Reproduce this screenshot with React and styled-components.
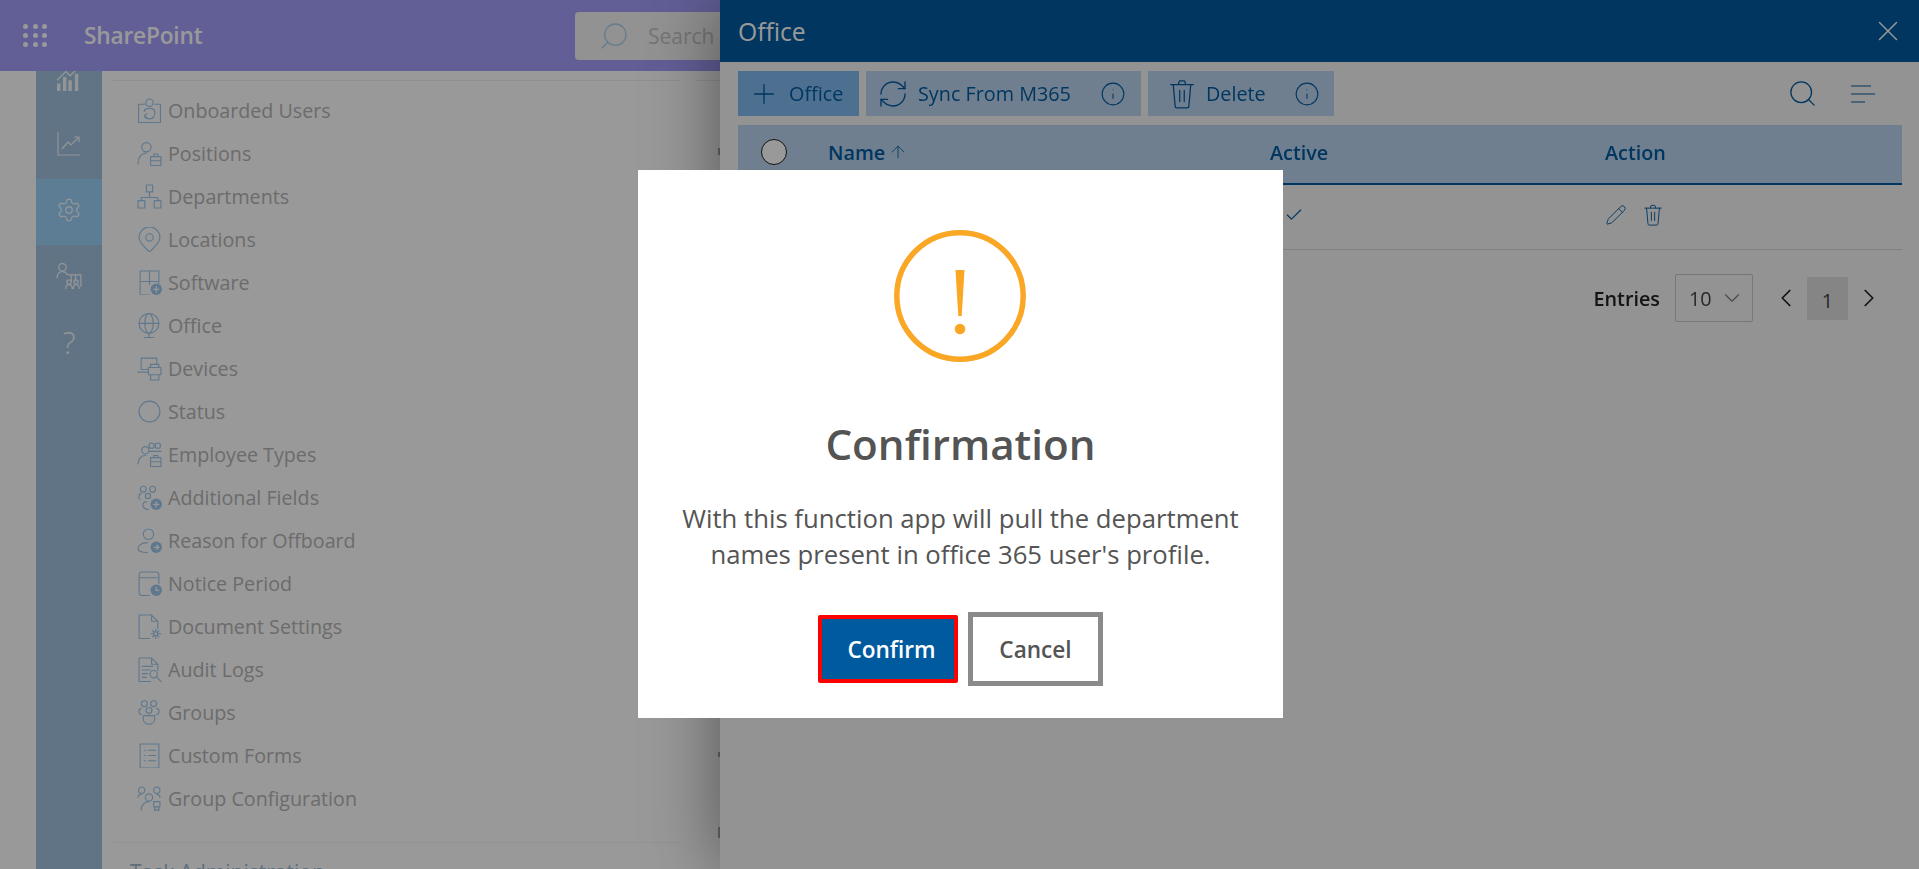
import styled, { createGlobalStyle } from 'styled-components'
import { Settings, Plus, RefreshCw, Info, Search, Check, Pencil, ChevronDown, ChevronLeft, ChevronRight, X, ArrowUp } from 'lucide-react'

const GlobalStyle = createGlobalStyle`
    html, body {
        margin: 0;
        height: 100%;
        overflow: hidden;
        background: #fff;
    }

    * {
        box-sizing: border-box;
    }

    body, button {
        font-family: "Open Sans", "Noto Sans", sans-serif;
    }
`

const Page = styled.div`
    display: flex;
    flex-direction: column;
    height: 869px;
    overflow: hidden;
`

// top bar

const TopBar = styled.header`
    flex: none;
    display: flex;
    align-items: center;
    height: 71px;
    padding-left: 23px;
    background: #a39efc;
    color: #fff;
    position: relative;
    z-index: 1;
`

const Waffle = styled.div`
    display: grid;
    grid-template-columns: repeat(3, 5px);
    gap: 4px 4.5px;
    width: 24px;
    margin-right: 37px;

    span {
        width: 5px;
        height: 5px;
        border-radius: 50%;
        background: #fff;
    }
`

const Brand = styled.span`
    width: 491px;
    font-size: 22.7px;
    font-weight: 600;
    letter-spacing: -.2px;
`

const SearchBox = styled.div`
    display: flex;
    align-items: center;
    gap: 18px;
    width: 600px;
    height: 48px;
    padding-left: 23px;
    border-radius: 4px;
    background: #f4f4f4;
    color: #c4c4c4;
    font-size: 21px;

    svg {
        color: #a8d0ee;
        transform: scaleX(-1);
    }
`

// left rail

const Body = styled.div`
    flex: 1;
    min-height: 0;
    display: flex;
    padding-left: 36px;
`

const Rail = styled.nav`
    flex: none;
    width: 66px;
    display: flex;
    flex-direction: column;
    background: #a0c1de;
    overflow: hidden;
`

const RailList = styled.div`
    margin-top: -24px;
`

const RailItem = styled.div`
    display: flex;
    align-items: center;
    justify-content: center;
    height: 66px;
    padding-bottom: 4px;
    background: ${props => props.$active ? '#9bd0f8' : 'transparent'};
    color: #f4f8fb;
    font-size: 31px;
    font-weight: 300;
`

// settings list

const Content = styled.main`
    flex: 1;
    min-width: 0;
    display: flex;
    gap: 16px;
    padding: 9px 0 0 11px;
`

const ListColumn = styled.section`
    flex: none;
    width: 567px;
    border-top: 1px solid #eee;
    padding-top: 8px;
`

const ListItem = styled.div`
    display: flex;
    align-items: center;
    gap: 6px;
    height: 43px;
    padding-left: 24px;
    color: #b4b4b4;
    font-size: 19.7px;
    white-space: nowrap;
`

const ItemIcon = styled.svg`
    flex: none;
    width: 25px;
    height: 25px;
    fill: none;
    stroke: #9fc9ec;
    stroke-width: 1.1;
    stroke-linecap: round;
    stroke-linejoin: round;

    .badge {
        fill: #9fc9ec;
        stroke: none;
    }

    .inner {
        stroke: #fff;
        stroke-width: 1.2;
    }
`

const SectionFoot = styled.div`
    margin-top: 22px;
    border-top: 1px solid #f4f4f4;
    padding: 15px 0 0 17px;
    color: #9fb9cf;
    font-size: 21px;
    white-space: nowrap;
`

const SideColumn = styled.section`
    flex: 1;
    border-top: 1px solid #eee;
`

const CutOffMark = styled.span`
    display: block;
    width: 2px;
    height: ${props => props.$height}px;
    margin: ${props => props.$top}px 0 0 22px;
    background: #aaa;
`

// office panel

const Panel = styled.aside`
    position: fixed;
    top: 0;
    right: 0;
    bottom: 0;
    width: 1199px;
    display: flex;
    flex-direction: column;
    background: #f5f5f5;
    box-shadow: 0 0 70px rgba(0, 0, 0, .45);
    z-index: 2;
`

const PanelHeader = styled.div`
    flex: none;
    display: flex;
    align-items: center;
    justify-content: space-between;
    height: 62px;
    padding: 0 14px 0 18px;
    background: #005a9e;
    color: #fff;
    font-size: 24.7px;
`

const Toolbar = styled.div`
    display: flex;
    align-items: center;
    height: 45px;
    margin: 9px 17px 9px 18px;
`

const ToolButton = styled.button`
    display: flex;
    align-items: center;
    width: ${props => props.$width}px;
    height: 45px;
    margin-right: 7px;
    padding: 0 0 0 ${props => props.$inset}px;
    border: 0;
    background: ${props => props.$primary ? '#82bbf0' : '#b9d4ee'};
    color: #005a9e;
    font-size: 19.8px;
`

const ToolLabel = styled.span`
    margin-left: ${props => props.$left}px;
    margin-right: auto;
`

const ToolInfo = styled(Info)`
    margin-right: ${props => props.$right}px;
`

const ToolbarEnd = styled.div`
    margin-left: auto;
    display: flex;
    align-items: center;
    gap: 33px;
    margin-right: 27px;
    color: #005a9e;
`

const Table = styled.div`
    margin: 0 17px 0 18px;
`

const TableHead = styled.div`
    display: grid;
    grid-template-columns: 90px 442px 335px 1fr;
    align-items: center;
    height: 60px;
    padding-bottom: 4px;
    background: #b9d4ee;
    border-bottom: 2px solid #005a9e;
    color: #005a9e;
    font-size: 19.8px;
    font-weight: 600;
`

const TableRow = styled.div`
    display: grid;
    grid-template-columns: 90px 442px 335px 1fr;
    align-items: center;
    height: 65px;
    padding-bottom: 4px;
    border-bottom: 1px solid #d8d8d8;
    color: #005a9e;
`

const SelectCircle = styled.span`
    display: block;
    width: 26px;
    height: 26px;
    margin-left: 23px;
    border: 1px solid #222;
    border-radius: 50%;
    background: #fff;
`

const NameCell = styled.span`
    display: flex;
    align-items: center;
    gap: 3px;
`

const CheckCell = styled.span`
    display: flex;
    padding-left: 14px;
`

const ActionCell = styled.span`
    display: flex;
    align-items: center;
    gap: 15px;
`

const Pagination = styled.div`
    display: flex;
    align-items: center;
    justify-content: flex-end;
    margin: 24px 35px 0 0;
    color: #222;
    font-size: 19.8px;
`

const EntriesLabel = styled.span`
    margin-right: 15px;
    font-weight: 600;
`

const PageSelect = styled.div`
    display: flex;
    align-items: center;
    justify-content: space-between;
    width: 78px;
    height: 48px;
    margin-right: 18px;
    padding: 0 7px 0 13px;
    border: 1px solid #c6c6c6;
    border-radius: 2px;
    color: #444;

    svg {
        color: #777;
    }
`

const PageNumber = styled.span`
    display: flex;
    align-items: center;
    justify-content: center;
    width: 41px;
    height: 43px;
    margin: 0 6px;
    padding-top: 4px;
    background: #dedede;
    color: #444;
`

// confirmation dialog

const Overlay = styled.div`
    position: fixed;
    inset: 0;
    display: flex;
    align-items: center;
    justify-content: center;
    padding: 19px 0 0 2px;
    background: rgba(0, 0, 0, .4);
    z-index: 3;
`

const Dialog = styled.div`
    display: flex;
    flex-direction: column;
    align-items: center;
    width: 645px;
    height: 548px;
    padding-top: 60px;
    background: #fff;
    color: #545454;
`

const WarningIcon = styled.svg`
    display: block;
    width: 132px;
    height: 132px;
    margin-right: 2px;
`

const DialogTitle = styled.h2`
    margin: 49px 0 0;
    font-size: 42.2px;
    font-weight: 600;
    line-height: 66px;
`

const DialogText = styled.p`
    margin: 24px 0 0;
    font-size: 25.7px;
    line-height: 36px;
    text-align: center;
`

const DialogButtons = styled.div`
    display: flex;
    align-items: center;
    gap: 10px;
    margin-top: 39px;
`

const ConfirmButton = styled.button`
    width: 140px;
    height: 68px;
    padding: 0 0 0 7px;
    border: 4px solid #f00;
    border-radius: 2px;
    background: #005a9e;
    color: #fff;
    font-size: 22.6px;
    font-weight: 600;
`

const CancelButton = styled.button`
    width: 135px;
    height: 74px;
    border: 5px solid #8a8a8a;
    background: #fff;
    color: #545454;
    font-size: 22.6px;
    font-weight: 600;
`

const Badge = ({ children }) => (
    <>
        <circle className="badge" cx="18.5" cy="18.5" r="5.5" />
        <g className="inner">{children}</g>
    </>
)

const plusMark = <path d="M18.5 16v5M16 18.5h5" />

const listItems = [
    ['Onboarded Users', <><path d="M7.5 6H1.5v17.5h21V6h-5.5" /><circle cx="12" cy="4.5" r="3.5" /><path d="M7 13c0-4 10-4 10 0v3M7 17c1 4 8 4 9.5 0M7 17l2.5-2M7 17l2.5 2" /></>],
    ['Positions', <><circle cx="9" cy="6" r="4.5" /><path d="M1 22c0-6 3-10 8-10.5M13 15h10v8.5H13zM16 15v-2.5h4V15M13 19h10" /></>],
    ['Departments', <><path d="M9 1h6v6.5H9zM12 7.5V13M4 16v-3h16v3M1 16h6.5v7H1zM16.5 16H23v7h-6.5z" /></>],
    ['Locations', <><path d="M12 24C7 19 2 15 2 10a10 10 0 0 1 20 0c0 5-5 9-10 14z" /><circle cx="12" cy="10" r="3.5" /></>],
    ['Software', <><path d="M12 24H3V1h18v12M3 11h18M12 1v13" /><Badge>{plusMark}</Badge></>],
    ['Office', <><circle cx="11.5" cy="10" r="9.5" /><ellipse cx="11.5" cy="10" rx="4" ry="9.5" /><path d="M2 10h19M11.5 19.5V23M7 23.5h9" /></>],
    ['Devices', <><path d="M10 13H4V2h15v5M1 15.5h9M13 11V8h8v3M11 11h12v7H11zM13 18h8v5h-8z" /></>],
    ['Status', <circle cx="12" cy="12" r="10" />],
    ['Employee Types', <><circle cx="8" cy="8" r="3.5" /><circle cx="14" cy="3.5" r="2.5" /><circle cx="20" cy="3.5" r="2.5" /><path d="M1 21c0-5 3-8 7-8M13 15h10v8.5H13zM16 15v-2h4v2M13 19h10M12 9h11" /></>],
    ['Additional Fields', <><circle cx="6" cy="4" r="2.8" /><circle cx="15" cy="4" r="2.8" /><circle cx="10.5" cy="10.5" r="2.5" /><path d="M4 8c-3 1-3 5-1 6M9 16c-3 0-4 3-3 5s3 2.5 5 2.5" /><Badge>{plusMark}</Badge></>],
    ['Reason for Offboard', <><circle cx="11" cy="6" r="5" /><path d="M10 14C4 14 1 17 1 20c0 2 3 3.5 9 3.5" /><Badge><path d="M16.5 18.5h4M19 16.5l2 2-2 2" /></Badge></>],
    ['Notice Period', <><path d="M12 23.5H4.5A2.5 2.5 0 0 1 2 21V4a3 3 0 0 1 3-3h13a3 3 0 0 1 3 3v8M2 6.5h19" /><Badge><path d="M18.5 15.5v3.2h2.5" /></Badge></>],
    ['Document Settings', <><path d="M12 23.5H2V1h12l6 6v7M14 1v6h6" /><circle cx="18" cy="19" r="2" /><path d="M18 14.5v2M18 21v2.5M13.5 19h2.5M20 19h3M15 16l1.5 1.5M19.5 20.5 21 22M21 16l-1.5 1.5M16.5 20.5 15 22" /></>],
    ['Audit Logs', <><path d="M13 23.5H2V1h12l6 6v6M14 1v6h6M5 9h10M5 12.5h8M5 16h5M5 19.5h4" /><circle cx="16" cy="16.5" r="3.5" /><path d="m18.5 19 5 5" /></>],
    ['Groups', <><circle cx="7" cy="3.5" r="2.8" /><circle cx="16" cy="3.5" r="2.8" /><circle cx="11.5" cy="10" r="2.8" /><path d="M4 8c-3 1-3 5 0 6M19 8c3 1 3 5 0 6M6 15h11v3c0 7-11 7-11 0z" /></>],
    ['Custom Forms', <><path d="M3 1h18v23H3zM7 7h1M11 7h7M7 12h1M11 12h7M7 17h1M11 17h7" /></>],
    ['Group Configuration', <><circle cx="4.5" cy="4" r="3" /><circle cx="19" cy="4" r="3" /><circle cx="11.5" cy="11" r="3.5" /><path d="M1 11c0-2 1-3 3-3M22 11c0-2-1-3-3-3M4 23c0-4 3-8 7-8M16 15h6v5h-6zM17 20v4l2-1.5 2 1.5v-4" /></>],
]

function TrashIcon({ size }) {
    return (
        <svg width={size} height={size} viewBox="0 0 24 24" fill="none" stroke="currentColor" strokeWidth="1" strokeLinecap="round" strokeLinejoin="round">
            <path d="M3 4.5h18M9 4.5 10 1.5h4l1 3M5 4.5l1.5 17A1.5 1.5 0 0 0 8 23h8a1.5 1.5 0 0 0 1.5-1.5L19 4.5M10.2 9v9M13.8 9v9" />
        </svg>
    )
}

function RailChart() {
    return (
        <svg width="26" height="26" viewBox="0 0 24 24" fill="none" stroke="#f4f8fb" strokeWidth="1.3">
            <path d="M1 14 9 6l4 4 9-9M18 1h4v4" />
            <path d="M2.5 24v-7M8 24V11M13 24V14M19 24V8" strokeWidth="3.2" />
        </svg>
    )
}

function RailTrend() {
    return (
        <svg width="24" height="26" viewBox="0 0 24 26" fill="none" stroke="#f4f8fb" strokeWidth="1.2">
            <path d="M1 1v23h22M5 18l6-7 3 3 8-8M17 6h5v5" />
        </svg>
    )
}

function RailPeople() {
    return (
        <svg width="26" height="26" viewBox="0 0 24 24" fill="none" stroke="#f4f8fb" strokeWidth="1.2">
            <circle cx="6" cy="4" r="3.5" />
            <path d="M1 14c0-4 2-6 5-6 3 0 4 2 5 3h12v11M14 11v6M18 11v6" />
            <circle cx="12" cy="17.5" r="2" />
            <circle cx="18.5" cy="17.5" r="2" />
            <path d="M9 24c0-3 1-4 3-4s3 1 3 4M16 24c0-3 1-4 2.5-4s3 1 3 4" />
        </svg>
    )
}

function SortLines() {
    return (
        <svg width="24" height="18" viewBox="0 0 24 18" fill="none" stroke="currentColor" strokeWidth="1.2">
            <path d="M0 1h20M0 9h24M0 17h14" />
        </svg>
    )
}

function Warning() {
    return (
        <WarningIcon viewBox="0 0 132 132">
            <circle cx="66" cy="66" r="63.2" fill="none" stroke="#faa726" strokeWidth="5.5" />
            <path d="M61.5 40h9l-2.8 46h-3.4z" fill="#faa726" />
            <circle cx="66" cy="99" r="5.3" fill="#faa726" />
        </WarningIcon>
    )
}

export default function App() {
    return (
        <Page>
            <GlobalStyle />

            <TopBar>
                <Waffle>
                    {Array.from({ length: 9 }, (_, i) => <span key={i} />)}
                </Waffle>
                <Brand>SharePoint</Brand>
                <SearchBox>
                    <Search size={32} strokeWidth={1} />
                    <span>Search this site</span>
                </SearchBox>
            </TopBar>

            <Body>
                <Rail>
                    <RailList>
                        <RailItem><RailChart /></RailItem>
                        <RailItem><RailTrend /></RailItem>
                        <RailItem $active><Settings size={26} strokeWidth={1.2} /></RailItem>
                        <RailItem><RailPeople /></RailItem>
                        <RailItem>?</RailItem>
                    </RailList>
                </Rail>

                <Content>
                    <ListColumn>
                        {listItems.map(([label, icon]) => (
                            <ListItem key={label}>
                                <ItemIcon viewBox="0 0 24 24">{icon}</ItemIcon>
                                {label}
                            </ListItem>
                        ))}
                        <SectionFoot>Task Administration</SectionFoot>
                    </ListColumn>
                    <SideColumn>
                        <CutOffMark $top={67} $height={7} />
                        <CutOffMark $top={597} $height={5} />
                        <CutOffMark $top={70} $height={11} />
                    </SideColumn>
                </Content>
            </Body>

            <Panel>
                <PanelHeader>
                    Office
                    <X size={34} strokeWidth={1} />
                </PanelHeader>

                <Toolbar>
                    <ToolButton $primary $width={121} $inset={10}>
                        <Plus size={32} strokeWidth={1} />
                        <ToolLabel $left={9}>Office</ToolLabel>
                    </ToolButton>
                    <ToolButton $width={275} $inset={11}>
                        <RefreshCw size={32} strokeWidth={1} />
                        <ToolLabel $left={9}>Sync From M365</ToolLabel>
                        <ToolInfo size={26} strokeWidth={1} $right={15} />
                    </ToolButton>
                    <ToolButton $width={186} $inset={19}>
                        <TrashIcon size={30} />
                        <ToolLabel $left={9}>Delete</ToolLabel>
                        <ToolInfo size={26} strokeWidth={1} $right={14} />
                    </ToolButton>
                    <ToolbarEnd>
                        <Search size={31} strokeWidth={1} />
                        <SortLines />
                    </ToolbarEnd>
                </Toolbar>

                <Table>
                    <TableHead>
                        <SelectCircle />
                        <NameCell>Name <ArrowUp size={20} strokeWidth={1} /></NameCell>
                        <span>Active</span>
                        <span>Action</span>
                    </TableHead>
                    <TableRow>
                        <span />
                        <span />
                        <CheckCell><Check size={20} strokeWidth={1.4} /></CheckCell>
                        <ActionCell>
                            <Pencil size={22} strokeWidth={1} />
                            <TrashIcon size={22} />
                        </ActionCell>
                    </TableRow>
                </Table>

                <Pagination>
                    <EntriesLabel>Entries</EntriesLabel>
                    <PageSelect>
                        10
                        <ChevronDown size={26} strokeWidth={1} />
                    </PageSelect>
                    <ChevronLeft size={30} strokeWidth={1.4} />
                    <PageNumber>1</PageNumber>
                    <ChevronRight size={30} strokeWidth={1.4} />
                </Pagination>
            </Panel>

            <Overlay>
                <Dialog>
                    <Warning />
                    <DialogTitle>Confirmation</DialogTitle>
                    <DialogText>
                        With this function app will pull the department<br />
                        names present in office 365 user's profile.
                    </DialogText>
                    <DialogButtons>
                        <ConfirmButton>Confirm</ConfirmButton>
                        <CancelButton>Cancel</CancelButton>
                    </DialogButtons>
                </Dialog>
            </Overlay>
        </Page>
    )
}
